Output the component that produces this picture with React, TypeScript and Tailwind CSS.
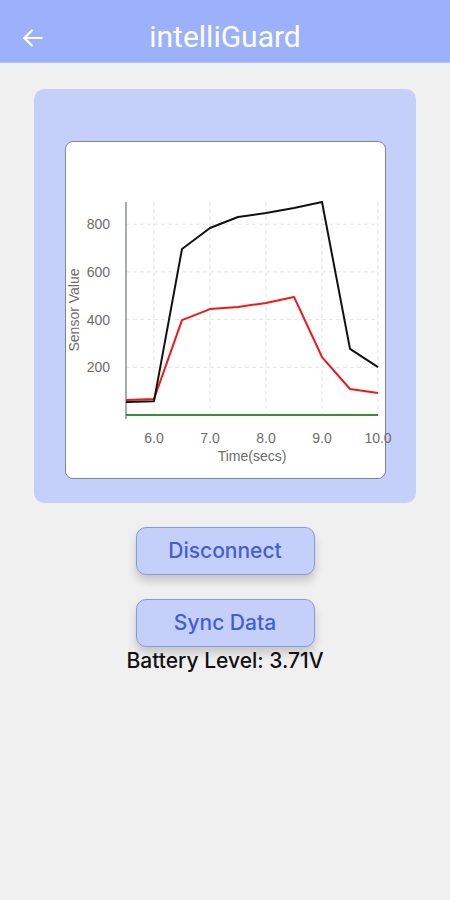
import React from 'react';

const black = [55, 58, 696, 784, 830, 847, 868, 893, 277, 201];
const red = [63, 67, 398, 444, 453, 470, 495, 243, 109, 92];

const px = (i: number) => 60 + i * 28;
const py = (v: number) => 273 - v * 0.2385;
const pts = (d: number[]) => d.map((v, i) => `${px(i)},${py(v)}`).join(' ');

const Chart = () => (
    <svg width="321" height="336" viewBox="0 0 321 336" className="block overflow-visible">
        {/* grid */}
        {[6, 7, 8, 9, 10].map(t => (
            <line key={t} x1={60 + (t - 5.5) * 56} x2={60 + (t - 5.5) * 56} y1={60} y2={273} stroke="#e4e4e4" strokeDasharray="4 3" />
        ))}
        {[200, 400, 600, 800].map(v => (
            <line key={v} x1={60} x2={312} y1={py(v)} y2={py(v)} stroke="#e4e4e4" strokeDasharray="4 3" />
        ))}
        {/* axes */}
        <line x1={60} x2={60} y1={60} y2={277} stroke="#a3adab" strokeWidth="2" />
        <line x1={60} x2={312} y1={273} y2={273} stroke="#3e8a3e" strokeWidth="2" />
        <polyline points={pts(red)} fill="none" stroke="#f01818" strokeWidth="2" strokeLinejoin="round" />
        <polyline points={pts(black)} fill="none" stroke="#111" strokeWidth="2" strokeLinejoin="round" />
        {/* labels */}
        <g fill="#6b6b6b" fontSize="14" fontFamily="'Liberation Sans', Arial, sans-serif">
            {[200, 400, 600, 800].map(v => (
                <text key={v} x={44} y={py(v) + 5} textAnchor="end">{v}</text>
            ))}
            {[6, 7, 8, 9, 10].map(t => (
                <text key={t} x={60 + (t - 5.5) * 56} y={301} textAnchor="middle">{t.toFixed(1)}</text>
            ))}
            <text x={186} y={319} textAnchor="middle">Time(secs)</text>
            <text x={0} y={0} textAnchor="middle" transform="translate(13,168) rotate(-90)">Sensor Value</text>
        </g>
    </svg>
);

export default function App() {
    return (
        <div className="min-h-[900px] bg-[#f0f0f0] font-['Roboto',sans-serif]">
            <header className="h-[63px] bg-[#9db1fb] border-b border-[#b3c2fb] flex items-end pb-[9px] px-5 relative">
                <svg width="26" height="26" viewBox="0 0 24 24" fill="none" stroke="white" strokeWidth="2" strokeLinecap="round" strokeLinejoin="round" className="mb-[2px]">
                    <path d="M20 12H4" />
                    <path d="M11 5l-7 7 7 7" />
                </svg>
                <h1 className="absolute left-0 right-0 bottom-[7px] text-center text-white text-[30px] leading-[36px] font-normal pointer-events-none">intelliGuard</h1>
            </header>

            <div className="mx-[34px] mt-[26px] bg-[#c5d0fa] rounded-[10px] pt-[52px] pb-[24px] pl-[31px] pr-[30px]">
                <div className="bg-white border border-[#7d8598] rounded-[8px]">
                    <Chart />
                </div>
            </div>

            <div className="flex flex-col items-center mt-[24px] font-['Inter',sans-serif]">
                <button className="w-[179px] h-[48px] bg-[#c5d0fa] border border-[#8a9ad8] rounded-[10px] text-[#3f5fd8] text-[21px] font-medium shadow-[0_6px_10px_rgba(0,0,0,0.18)]">
                    Disconnect
                </button>
                <button className="mt-[24px] w-[179px] h-[48px] bg-[#c5d0fa] border border-[#8a9ad8] rounded-[10px] text-[#3f5fd8] text-[21px] font-medium shadow-[0_6px_10px_rgba(0,0,0,0.18)]">
                    Sync Data
                </button>
                <p className="mt-[1px] text-[21px] leading-[26px] font-medium text-[#111]">Battery Level: 3.71V</p>
            </div>
        </div>
    );
}
